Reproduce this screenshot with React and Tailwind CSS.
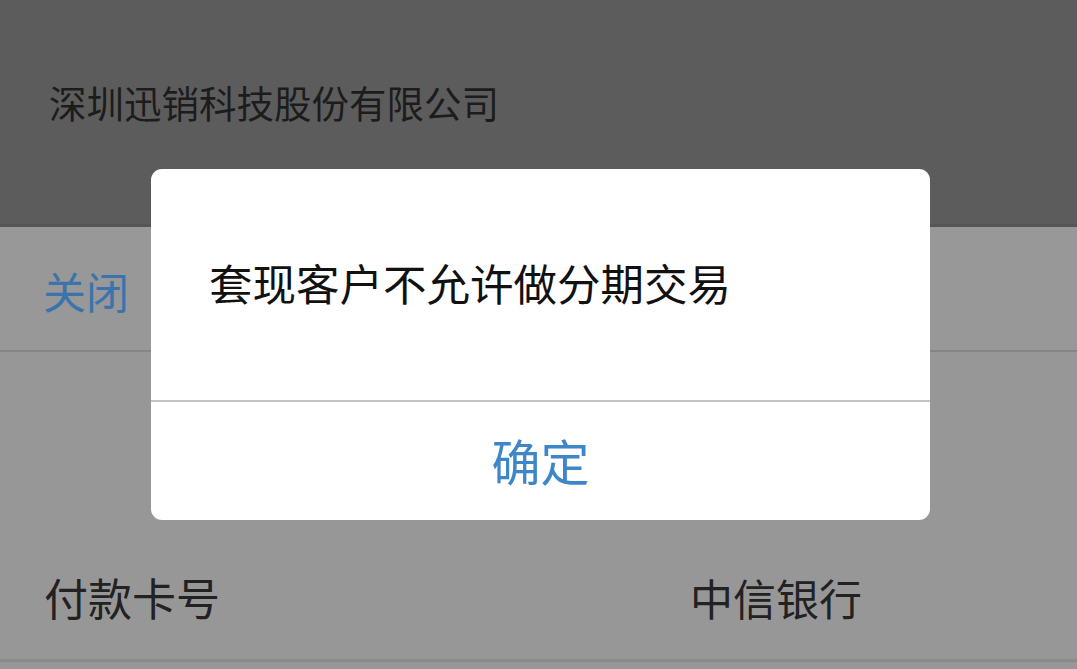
import React from 'react';

const cjk = { fontFamily: '"Noto Sans CJK SC", "Noto Sans", sans-serif' };

const App = () => {
  return (
    <div className="relative w-[1077px] h-[669px] overflow-hidden bg-[#979797]" style={cjk}>
      {/* Header - merchant name */}
      <div className="h-[227px] bg-[#5c5c5c] pl-[49px] pt-[78px] border-b-[3px] border-[#555]">
        <p className="text-[37.5px] leading-[48px] text-[#1c1c1c]">深圳迅销科技股份有限公司</p>
      </div>

      {/* Close bar */}
      <div className="h-[125px] bg-[#989898] border-b-[2px] border-[#858585] flex items-center pl-[43px]">
        <span className="text-[43px] leading-none text-[#3b74ad] pt-[4px]">关闭</span>
      </div>

      {/* Card row */}
      <div className="h-[310px] flex items-end justify-between pl-[44px] pr-[215px] pb-[40px] border-b-[3px] border-[#8a8a8a]">
        <span className="text-[44px] leading-none text-[#222]">付款卡号</span>
        <span className="text-[43px] leading-none text-[#222]">中信银行</span>
      </div>

      {/* Alert dialog */}
      <div className="absolute left-[151px] top-[169px] w-[779px] h-[351px] bg-white rounded-[11px] flex flex-col">
        <div className="h-[233px] pl-[58px] pt-[90px] border-b-[2px] border-[#c4c4c4]">
          <p className="text-[43.5px] leading-[48px] text-[#111]">套现客户不允许做分期交易</p>
        </div>
        <div className="flex-1 flex items-center justify-center pb-[4px]">
          <span className="text-[49px] leading-none text-[#3d86c8]">确定</span>
        </div>
      </div>
    </div>
  );
};

export default App;
